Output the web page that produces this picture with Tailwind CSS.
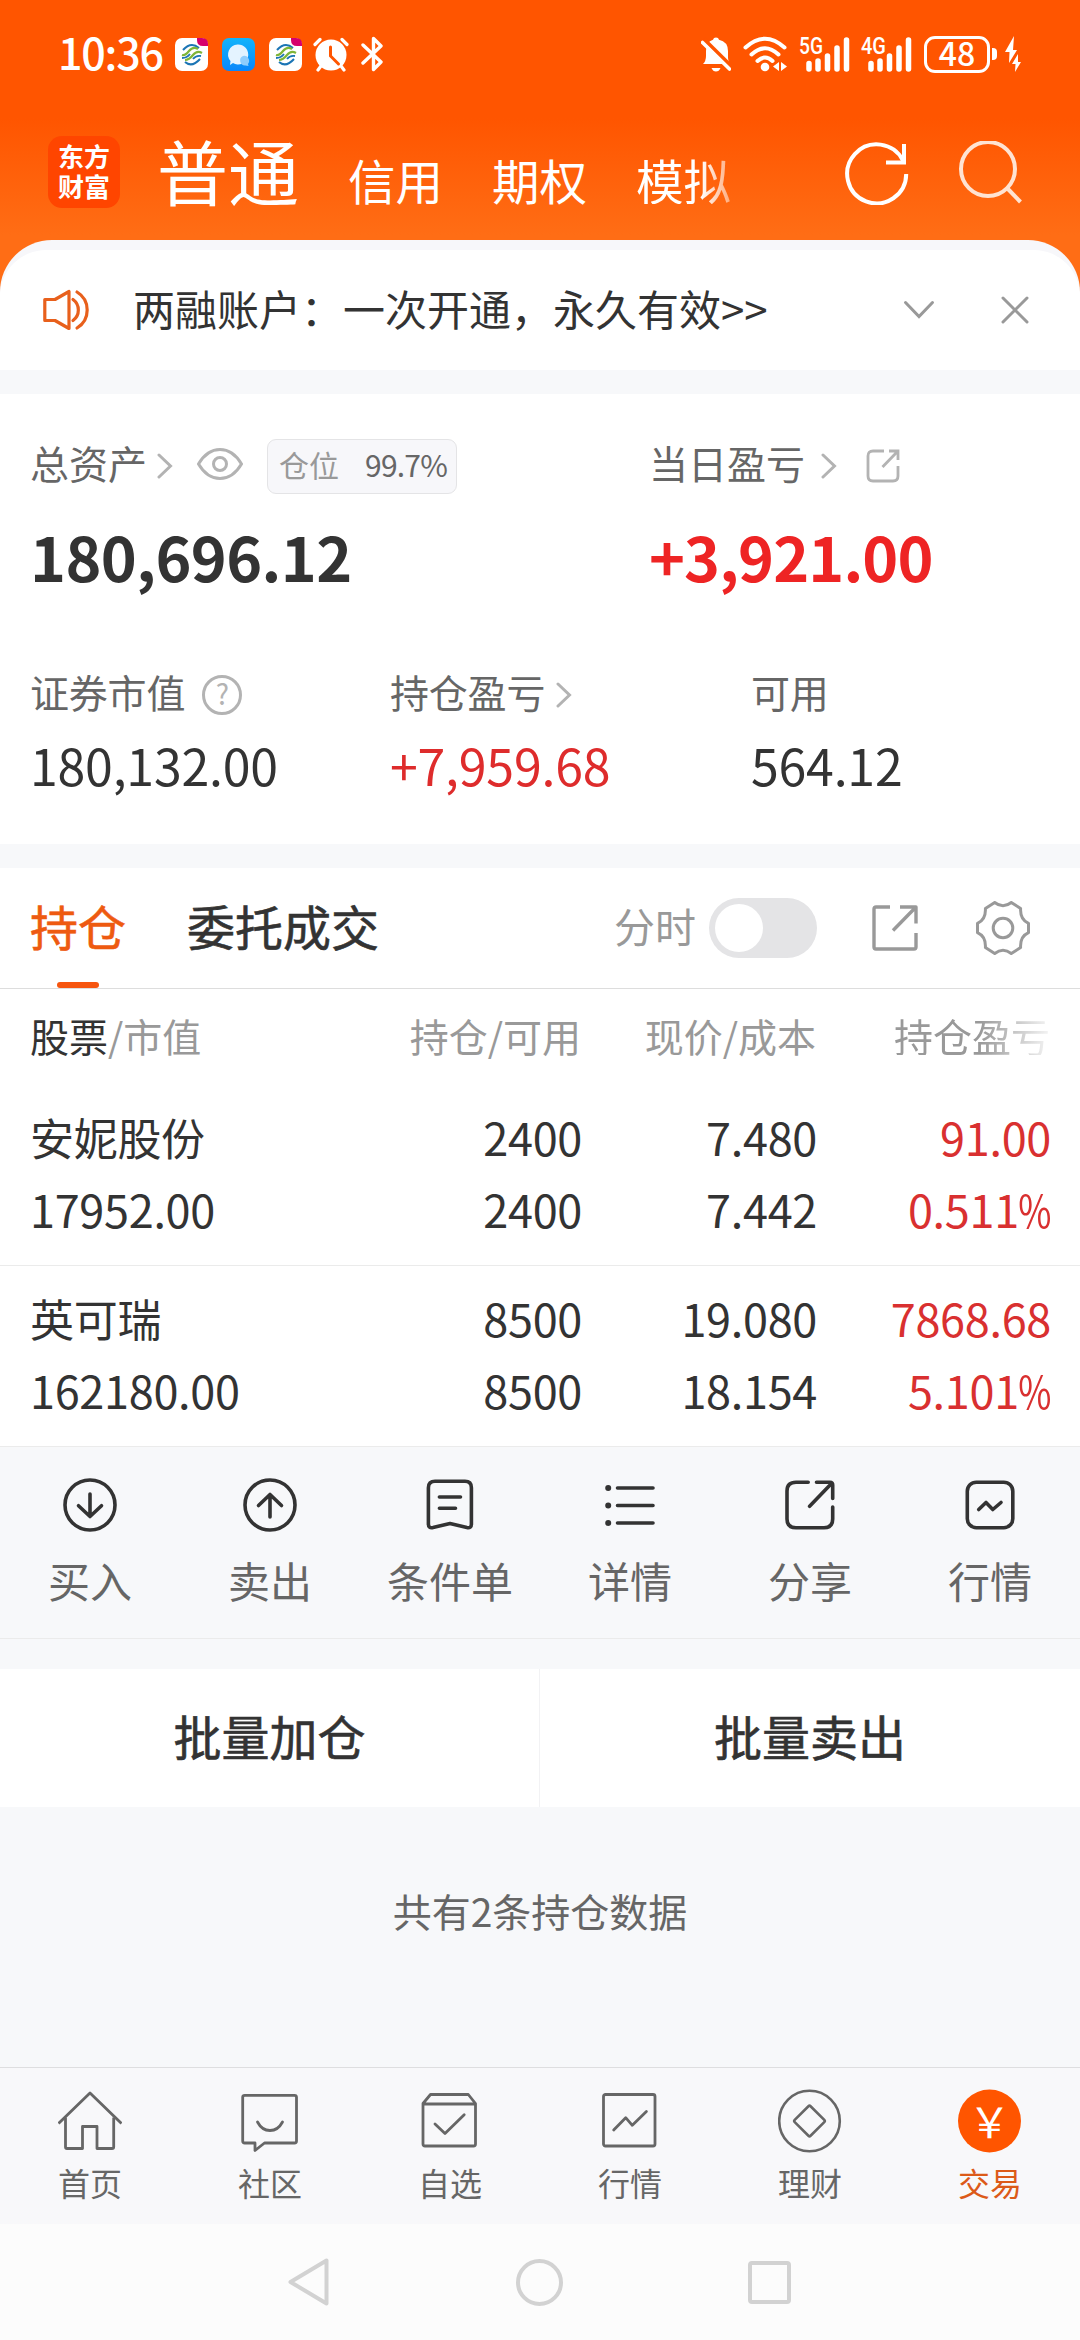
<!DOCTYPE html>
<html lang="zh-CN">
<head>
  <meta charset="UTF-8" />
  <meta name="viewport" content="width=device-width, initial-scale=1.0"/>
  <title>东方财富 - 交易</title>
  <script src="https://cdn.jsdelivr.net/npm/@tailwindcss/browser@4"></script>
</head>
<body class="w-[1080px] h-[2340px] overflow-hidden flex flex-col bg-[#f7f8fa] text-[#333] leading-none font-['Noto_Sans_CJK_SC',sans-serif]">

  <!-- Top area: status bar + account tabs -->
  <div class="bg-[linear-gradient(#ff5500_0px,#ff5500_118px,#ff6d15_235px)]">
    <div class="h-[108px] pl-[58px] pr-[59px] flex items-center justify-between text-white">
      <div class="flex items-center">
        <span class="text-[43px] font-medium w-[117px] pb-[6px] tracking-[-1.2px]">10:36</span>
        <svg class="w-[33px] h-[33px]" viewBox="0 0 33 33">
          <rect width="33" height="33" rx="7" fill="#fff"/>
          <path d="M22 0h5q6 0 6 6v2h-5q-6 0-6-6z" fill="#d6006c"/>
          <path d="M8 12Q16 3 24 10M10 24Q17 30 25 21" fill="none" stroke="#1b75b5" stroke-width="2"/>
          <path d="M7 17Q10 18 14 13T23 11M10 22Q14 22 18 17T27 15" fill="none" stroke="#7fb539" stroke-width="2.2"/>
          <path d="M7 20Q12 20 15 16M18 21Q21 17 26 18" fill="none" stroke="#1b75b5" stroke-width="1.8"/>
        </svg>
        <svg class="w-[33px] h-[33px] ml-[14px]" viewBox="0 0 33 33">
          <defs><linearGradient id="msg" x2="0" y2="1"><stop stop-color="#12b4fb"/><stop offset="1" stop-color="#0a86fa"/></linearGradient></defs>
          <rect width="33" height="33" rx="7" fill="url(#msg)"/>
          <path d="M15.500 6.500a10 10 0 1 1-4.500 18.500l-3 2 .5-4A10 10 0 0 1 15.500 6.500z" fill="#e4f3ff"/>
          <path d="M21 18a5 5 0 0 1 5 8l.5 2-3-.5A5 5 0 0 1 21 18z" fill="#8fcdfd"/>
        </svg>
        <svg class="w-[33px] h-[33px] ml-[14px]" viewBox="0 0 33 33">
          <rect width="33" height="33" rx="7" fill="#fff"/>
          <path d="M22 0h5q6 0 6 6v2h-5q-6 0-6-6z" fill="#d6006c"/>
          <path d="M8 12Q16 3 24 10M10 24Q17 30 25 21" fill="none" stroke="#1b75b5" stroke-width="2"/>
          <path d="M7 17Q10 18 14 13T23 11M10 22Q14 22 18 17T27 15" fill="none" stroke="#7fb539" stroke-width="2.2"/>
          <path d="M7 20Q12 20 15 16M18 21Q21 17 26 18" fill="none" stroke="#1b75b5" stroke-width="1.8"/>
        </svg>
        <svg class="w-[36px] h-[35px] ml-[11px]" viewBox="0 0 36 35" fill="none" stroke="#fff" stroke-width="3.200" stroke-linecap="round">
          <circle cx="18" cy="18" r="15.500" fill="#fff" stroke="none"/>
          <path d="M2 7.500L7 2.500M34 7.500L29 2.500M5 33l3-4M31 33l-3-4"/>
          <path d="M17.500 10v9l8 8" stroke="#ff5500" stroke-width="3"/>
        </svg>
        <svg class="w-[22px] h-[36px] ml-[12px]" viewBox="0 0 22 36" fill="none" stroke="#fff" stroke-width="3.400" stroke-linecap="round" stroke-linejoin="round">
          <path d="M2 9L20 26 12.500 33.500V2.500L20 10 2 27"/>
        </svg>
      </div>
      <div class="flex items-center">
        <svg class="w-[30px] h-[36px]" viewBox="0 0 30 36">
          <path d="M15 1.500q2.500 0 3 2.200 9 2 9 11.300v7q0 3 2 6H2q3-3 3-8v-5q0-9 7-11.300.5-2.200 3-2.200zM10.500 32h9q-1.500 3.500-4.500 3.500t-4.500-3.500z" fill="#fff"/>
          <path d="M2.500 3L30 30" stroke="#ff5500" stroke-width="4"/>
          <path d="M1.500 6.500L28.500 33" stroke="#fff" stroke-width="3.600" stroke-linecap="round"/>
        </svg>
        <svg class="w-[44px] h-[36px] ml-[12px]" viewBox="0 0 44 36" fill="none" stroke="#fff" stroke-width="4" stroke-linecap="round">
          <path d="M2.500 11.500Q22-6 41.500 11.500M8.500 18.500Q22 6 35.500 18.500M14.500 25Q22 18 29.500 25"/>
          <circle cx="22" cy="31" r="4.300" fill="#fff" stroke="none"/>
          <path d="M36 26v9l-6-4.500zM38 26l6 4.500-6 4.500z" fill="#fff" stroke="none"/>
        </svg>
        <svg class="w-[51px] h-[36px] ml-[12px] overflow-visible" viewBox="0 0 51 36">
          <text x="0" y="18" font-family="Roboto" font-size="24" font-weight="500" textLength="24" lengthAdjust="spacingAndGlyphs" fill="#fff">5G</text>
          <path d="M10 27.500V33M19 25V33M28.500 20V33M38 12V33M47.500 4V33" stroke="#fff" stroke-width="5.500" stroke-linecap="round"/>
        </svg>
        <svg class="w-[51px] h-[36px] ml-[11px] overflow-visible" viewBox="0 0 51 36">
          <text x="0" y="18" font-family="Roboto" font-size="24" font-weight="500" textLength="25" lengthAdjust="spacingAndGlyphs" fill="#fff">4G</text>
          <path d="M10 27.500V33M19 25V33M28.500 20V33M38 12V33M47.500 4V33" stroke="#fff" stroke-width="5.500" stroke-linecap="round"/>
        </svg>
        <div class="ml-[12px] w-[66px] h-[37px] rounded-[11px] border-[3px] border-white flex items-center justify-center text-[32px] font-medium pb-[4px]">48</div>
        <div class="ml-[2px] w-[5px] h-[12px] rounded-r-[4px] bg-white"></div>
        <svg class="w-[16px] h-[36px] ml-[8px]" viewBox="0 0 16 36" fill="#fff">
          <path d="M9 0L0 16h4.500L4 27l8-13H8zM13 18l-6 10h3.500L10 36l6-10h-3z"/>
        </svg>
      </div>
    </div>

    <div class="h-[132px] pl-[48px] pr-[56px] flex items-start text-white">
      <div class="mt-[28px] w-[72px] h-[72px] rounded-[14px] bg-[#ff4500] flex flex-col items-center pt-[5px] text-[26px] leading-[30px] font-bold">
        <span>东方</span>
        <span>财富</span>
      </div>
      <nav class="mt-[26px] ml-[37px] flex items-baseline gap-[49px] text-[47.500px]">
        <span class="text-[71px]">普通</span>
        <span>信用</span>
        <span>期权</span>
        <span class="[mask-image:linear-gradient(90deg,#000_68%,rgba(0,0,0,0.45)_100%)]">模拟</span>
      </nav>
      <div class="ml-auto mt-[33px] flex gap-[49px]">
        <svg class="w-[64px] h-[64px]" viewBox="0 0 64 64" fill="none" stroke="#fff" stroke-width="4">
          <path d="M61.200 33A29.500 29.500 0 1 1 58 19.500"/>
          <path d="M59 3V21.500H41"/>
        </svg>
        <svg class="w-[66px] h-[64px]" viewBox="0 0 66 64" fill="none" stroke="#ffe3d2" stroke-width="4">
          <circle cx="30" cy="28" r="27"/>
          <path d="M49 47L62.500 61"/>
        </svg>
      </div>
    </div>
  </div>

  <!-- Notice -->
  <div class="bg-[#ff6d15]">
    <div class="rounded-t-[52px] overflow-hidden bg-[#f7f7fa] pt-[10px]">
      <div class="h-[120px] rounded-t-[46px] bg-white pl-[43px] pr-[51px] flex items-center">
        <svg class="w-[48px] h-[42px]" viewBox="0 0 48 42" fill="none" stroke="#e8601c" stroke-width="3.200" stroke-linecap="round" stroke-linejoin="round">
          <path d="M1.800 10.500H12L26 2.500V39.500L12 31.500H1.800z"/>
          <path d="M30 10.500A13 13 0 0 1 30 31.500M34 3A21 21 0 0 1 34 39"/>
        </svg>
        <p class="ml-[42px] pb-1 text-[42px]">两融账户：一次开通，永久有效&gt;&gt;</p>
        <svg class="ml-auto w-[32px] h-[20px]" viewBox="0 0 32 20" fill="none" stroke="#999" stroke-width="3" stroke-linecap="round">
          <path d="M2.500 2.500L16 16.500 29.500 2.500"/>
        </svg>
        <svg class="ml-[66px] w-[28px] h-[28px]" viewBox="0 0 28 28" fill="none" stroke="#999" stroke-width="3" stroke-linecap="round">
          <path d="M2 2L26 26M26 2L2 26"/>
        </svg>
      </div>
    </div>
  </div>

  <!-- Assets -->
  <section class="mt-[24px] h-[450px] bg-white pl-[30px] pt-[45px]">
    <div class="grid grid-cols-[619px_1fr]">
      <div>
        <div class="h-[54px] flex items-center">
          <span class="text-[39px] text-[#666] pb-2">总资产</span>
          <svg class="ml-[10px] w-[16px] h-[26px]" viewBox="0 0 16 26" fill="none" stroke="#b3b3b3" stroke-width="3" stroke-linecap="round"><path d="M2 2L13.500 13 2 24"/></svg>
          <svg class="ml-[24px] mb-1 w-[46px] h-[32px]" viewBox="0 0 46 32" fill="none" stroke="#b3b3b3" stroke-width="3">
            <path d="M1.500 16C8 5 15 1.500 23 1.500S38 5 44.500 16C38 27 31 30.500 23 30.500S8 27 1.500 16z"/>
            <circle cx="23" cy="16" r="6.500"/>
          </svg>
          <div class="ml-[24px] w-[190px] h-[55px] rounded-[9px] border border-[#e4e4e6] bg-[#f7f7fa] pl-[11px] pr-[9px] pb-[5px] flex items-center justify-between text-[30px]">
            <span class="text-[#999]">仓位</span>
            <span class="text-[#666] tracking-[-0.8px]">99.7%</span>
          </div>
        </div>
        <div class="mt-[32px] text-[61px] font-bold tracking-[-0.6px]">180,696.12</div>
      </div>
      <div>
        <div class="h-[54px] flex items-center">
          <span class="text-[39px] text-[#666] pb-2">当日盈亏</span>
          <svg class="ml-[16px] w-[16px] h-[26px]" viewBox="0 0 16 26" fill="none" stroke="#b3b3b3" stroke-width="3" stroke-linecap="round"><path d="M2 2L13.500 13 2 24"/></svg>
          <svg class="ml-[29px] w-[34px] h-[34px]" viewBox="0 0 34 34" fill="none" stroke="#b3b3b3" stroke-width="2.800">
            <path d="M18 2H7Q2 2 2 7V27Q2 32 7 32H27Q32 32 32 27V17M23 2H32V11M16.500 18L31 3"/>
          </svg>
        </div>
        <div class="mt-[32px] text-[61px] font-bold tracking-[-0.9px] text-[#ee2424]">+3,921.00</div>
      </div>
    </div>

    <div class="mt-[89px] grid grid-cols-[360px_361px_1fr] text-[50px] tracking-[-0.200px]">
      <div>
        <div class="h-[40px] flex items-center text-[39px] text-[#666]">
          <span class="pb-[7px]">证券市值</span>
          <div class="ml-[17px] w-[40px] h-[40px] rounded-full border-[3px] border-[#b3b3b3] flex items-center justify-center pb-[4px] text-[28px] text-[#b3b3b3]">?</div>
        </div>
        <div class="mt-[24px]">180,132.00</div>
      </div>
      <div>
        <div class="h-[40px] flex items-center text-[39px] text-[#666]">
          <span class="pb-[7px]">持仓盈亏</span>
          <svg class="ml-[11px] w-[16px] h-[26px]" viewBox="0 0 16 26" fill="none" stroke="#b3b3b3" stroke-width="3" stroke-linecap="round"><path d="M2 2L13.500 13 2 24"/></svg>
        </div>
        <div class="mt-[24px] text-[#de2c2c]">+7,959.68</div>
      </div>
      <div>
        <div class="h-[40px] flex items-center text-[39px] text-[#666]">
          <span class="pb-[7px]">可用</span>
        </div>
        <div class="mt-[24px]">564.12</div>
      </div>
    </div>
  </section>

  <!-- Positions -->
  <section class="mt-[24px] bg-white">
    <div class="h-[121px] border-b border-[#ddd] pl-[30px] pr-[50px] flex items-center">
      <div class="relative h-full flex items-center text-[48px] text-[#ee5a10] [-webkit-text-stroke:0.6px]">
        <span class="pb-[6px]">持仓</span>
        <div class="absolute bottom-0 left-[27px] w-[42px] h-[6px] rounded-[3px] bg-[#f6550f]"></div>
      </div>
      <span class="ml-[61px] pb-[6px] text-[48px] [-webkit-text-stroke:0.6px]">委托成交</span>
      <span class="ml-auto pb-[5px] text-[41px] text-[#999]">分时</span>
      <div class="ml-[13px] w-[108px] h-[60px] rounded-full bg-[#e4e4e6] p-[6px]">
        <div class="w-[48px] h-[48px] rounded-full bg-white"></div>
      </div>
      <svg class="ml-[55px] w-[46px] h-[46px]" viewBox="0 0 46 46" fill="none" stroke="#999" stroke-width="3.400" stroke-linejoin="round">
        <path d="M18 2H4Q2 2 2 4V42Q2 44 4 44H42Q44 44 44 42V28M28 2H44V18.500M21 25.500L43 3"/>
      </svg>
      <svg class="ml-[58px] w-[54px] h-[54px]" viewBox="0 0 54 54" fill="none" stroke="#999" stroke-width="3" stroke-linejoin="round">
        <path d="M18.700 1.500Q27 8 35.300 1.500L44.600 7.500Q44 18.500 52.500 22.300V31.700Q44 35.500 44.600 46.500L35.300 52.500Q27 46 18.700 52.500L9.400 46.500Q10 35.500 1.500 31.700V22.300Q10 18.500 9.400 7.500z"/>
        <circle cx="27" cy="27" r="9.800"/>
      </svg>
    </div>

    <div class="h-[96px] pl-[30px] pb-1 grid grid-cols-[310px_241px_235px_234px] items-center text-right text-[39px] text-[#999]">
      <span class="text-left"><span class="text-[#333]">股票</span>/市值</span>
      <span>持仓/可用</span>
      <span>现价/成本</span>
      <span><span class="inline-block [mask-image:linear-gradient(90deg,#000_55%,transparent_105%)]">持仓盈亏</span></span>
    </div>

    <div class="h-[181px] border-b border-[#ebebeb] pt-[16px] pl-[30px] grid grid-cols-[310px_242px_235px_234px] content-start text-right text-[45px] leading-[72px] tracking-[-0.300px]">
      <span class="text-left text-[44px]">安妮股份</span>
      <span>2400</span>
      <span>7.480</span>
      <span class="text-[#d93030]">91.00</span>
      <span class="text-left">17952.00</span>
      <span>2400</span>
      <span>7.442</span>
      <span class="text-[#d93030]">0.511<span class="inline-block origin-right scale-x-80 -ml-[9px]">%</span></span>
    </div>

    <div class="h-[181px] border-b border-[#ebebeb] pt-[16px] pl-[30px] grid grid-cols-[310px_242px_235px_234px] content-start text-right text-[45px] leading-[72px] tracking-[-0.300px]">
      <span class="text-left text-[44px]">英可瑞</span>
      <span>8500</span>
      <span>19.080</span>
      <span class="text-[#d93030]">7868.68</span>
      <span class="text-left">162180.00</span>
      <span>8500</span>
      <span>18.154</span>
      <span class="text-[#d93030]">5.101<span class="inline-block origin-right scale-x-80 -ml-[9px]">%</span></span>
    </div>
  </section>

  <!-- Row actions -->
  <div class="h-[192px] border-b border-[#ebebeb] pt-[31px] grid grid-cols-6 text-[42px] text-[#666]">
    <div class="flex flex-col items-center gap-[27px]">
      <svg class="w-[54px] h-[54px]" viewBox="0 0 54 54" fill="none" stroke="#333" stroke-width="3.600" stroke-linecap="round" stroke-linejoin="round">
        <circle cx="27" cy="27" r="25"/>
        <path d="M27 16V38.500M15.500 27.700L27 38.500 38.500 27.700"/>
      </svg>
      <span>买入</span>
    </div>
    <div class="flex flex-col items-center gap-[27px]">
      <svg class="w-[54px] h-[54px]" viewBox="0 0 54 54" fill="none" stroke="#333" stroke-width="3.600" stroke-linecap="round" stroke-linejoin="round">
        <circle cx="27" cy="27" r="25"/>
        <path d="M27 39V16.500M15.500 27.500L27 16.500 38.500 27.500"/>
      </svg>
      <span>卖出</span>
    </div>
    <div class="flex flex-col items-center gap-[27px]">
      <svg class="w-[54px] h-[54px]" viewBox="0 0 54 54" fill="none" stroke="#333" stroke-width="3.600" stroke-linecap="round" stroke-linejoin="round">
        <path d="M12 3.300H42q6.400 0 6.400 6.400V46q0 4.500-4.500 3.600L27 45.500 10 49.600Q5.400 50.500 5.400 46V9.700Q5.400 3.300 12 3.300z"/>
        <path d="M16.400 19H37.500M16.400 30.300H32.500"/>
      </svg>
      <span>条件单</span>
    </div>
    <div class="flex flex-col items-center gap-[27px]">
      <svg class="w-[54px] h-[54px]" viewBox="0 0 54 54" fill="none" stroke="#333" stroke-width="3.600" stroke-linecap="round">
        <path d="M14.500 10H50M14.500 27.500H50M14.500 45H50"/>
        <path d="M5.200 10h.01M5.200 27.500h.01M5.200 45h.01" stroke-width="6"/>
      </svg>
      <span>详情</span>
    </div>
    <div class="flex flex-col items-center gap-[27px]">
      <svg class="w-[54px] h-[54px]" viewBox="0 0 54 54" fill="none" stroke="#333" stroke-width="3.600" stroke-linecap="round" stroke-linejoin="round">
        <path d="M25.200 4.200H13Q4 4.200 4 13V41Q4 49.700 13 49.700H41Q49.700 49.700 49.700 41V29M33.500 4.200H47Q49.700 4.200 49.700 7V20.500M26.600 28.300L48.500 5.500"/>
      </svg>
      <span>分享</span>
    </div>
    <div class="flex flex-col items-center gap-[27px]">
      <svg class="w-[54px] h-[54px]" viewBox="0 0 54 54" fill="none" stroke="#333" stroke-width="3.600" stroke-linecap="round" stroke-linejoin="round">
        <rect x="4.300" y="4.200" width="45.500" height="45.500" rx="9"/>
        <path d="M15.700 31.500L23 24.500 29.800 31.500 38 24.500"/>
      </svg>
      <span>行情</span>
    </div>
  </div>

  <div class="mt-[30px] h-[138px] grid grid-cols-2 bg-white text-[48px] [-webkit-text-stroke:0.6px]">
    <button class="border-r border-[#f2f2f4] pb-[7px]">批量加仓</button>
    <button class="pb-[7px]">批量卖出</button>
  </div>

  <p class="mt-[84px] text-center text-[39px] text-[#666]">共有2条持仓数据</p>

  <!-- Bottom tabs -->
  <div class="mt-auto h-[157px] shrink-0 border-t border-[#dedee0] bg-[#f8f8fa] pt-[21px] grid grid-cols-6 text-[32px] text-[#666]">
    <div class="flex flex-col items-center gap-[13px]">
      <svg class="w-[64px] h-[64px]" viewBox="0 0 64 64" fill="none" stroke="#666" stroke-width="2.800" stroke-linejoin="round">
        <path d="M.5 34.500L32 4 63.500 34.500"/>
        <path d="M7.500 28.500V58q0 1.500 1.500 1.500H24.500V37.500H39V59.500H54q1.700 0 1.700-1.500V28.500"/>
      </svg>
      <span>首页</span>
    </div>
    <div class="flex flex-col items-center gap-[13px]">
      <svg class="w-[64px] h-[64px]" viewBox="0 0 64 64" fill="none" stroke="#666" stroke-width="2.800" stroke-linejoin="round">
        <path d="M6.700 6.300H56.500q2 0 2 2V52q0 2-2 2H26.500L17 61.500V54H6.700q-2 0-2-2V8.300q0-2 2-2z"/>
        <path d="M19.500 33Q24 41.500 32 41.500T44.500 33" stroke-linecap="round"/>
      </svg>
      <span>社区</span>
    </div>
    <div class="flex flex-col items-center gap-[13px]">
      <svg class="w-[64px] h-[64px]" viewBox="0 0 64 64" fill="none" stroke="#666" stroke-width="2.800" stroke-linejoin="round">
        <path d="M5 14.500L12.500 5.500H50.300L57.500 14.500V55q0 2-2 2H7q-2 0-2-2zM5 15H57.500"/>
        <path d="M17 35L27 44.500 46.200 25.700" stroke-linecap="round"/>
      </svg>
      <span>自选</span>
    </div>
    <div class="flex flex-col items-center gap-[13px]">
      <svg class="w-[64px] h-[64px]" viewBox="0 0 64 64" fill="none" stroke="#666" stroke-width="2.800" stroke-linejoin="round">
        <rect x="5.500" y="5.500" width="51.500" height="51.500" rx="2"/>
        <path d="M15.700 41L27.700 28.700 34.300 36.300 48.400 22.500" stroke-linecap="round"/>
      </svg>
      <span>行情</span>
    </div>
    <div class="flex flex-col items-center gap-[13px]">
      <svg class="w-[64px] h-[64px]" viewBox="0 0 64 64" fill="none" stroke="#666" stroke-width="2.600" stroke-linejoin="round">
        <circle cx="31.500" cy="32" r="30.300"/>
        <rect x="20.300" y="20.800" width="22.400" height="22.400" rx="1.500" transform="rotate(45 31.500 32)"/>
      </svg>
      <span>理财</span>
    </div>
    <div class="flex flex-col items-center gap-[13px] text-[#dc5a18]">
      <svg class="w-[64px] h-[64px]" viewBox="0 0 64 64">
        <circle cx="31.500" cy="32" r="31.500" fill="#ff5500"/>
        <text x="31.500" y="49" text-anchor="middle" font-family="Noto Sans CJK SC" font-size="42" fill="#fff">￥</text>
      </svg>
      <span>交易</span>
    </div>
  </div>

  <!-- System navigation -->
  <div class="h-[116px] shrink-0 bg-[#fcfcfc] pl-[287px] pr-[289px] flex items-center justify-between">
    <svg class="w-[44px] h-[48px]" viewBox="0 0 44 48" fill="none" stroke="#d2d2d2" stroke-width="4" stroke-linejoin="round"><path d="M3.500 24L39.500 2.500V45.500z"/></svg>
    <div class="w-[47px] h-[47px] rounded-full border-4 border-[#d2d2d2]"></div>
    <div class="w-[43px] h-[43px] rounded-[4px] border-4 border-[#d2d2d2]"></div>
  </div>
</body>
</html>
